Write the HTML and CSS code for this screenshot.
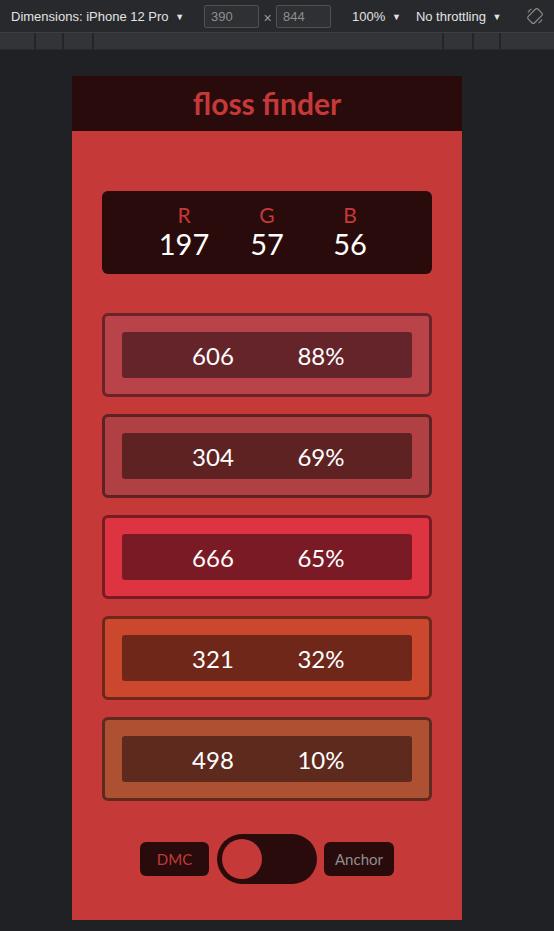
FILE: index.html
```html
<!DOCTYPE html>
<html lang="en">
<head>
<meta charset="utf-8">
<title>floss finder</title>
<link rel="stylesheet" href="styles.css">
</head>
<body>
<div class="toolbar">
  <span class="tb-item dims">Dimensions: iPhone 12 Pro <span class="caret">▼</span></span>
  <span class="tb-input">390</span>
  <span class="times">×</span>
  <span class="tb-input">844</span>
  <span class="tb-item zoom">100% <span class="caret">▼</span></span>
  <span class="tb-item throttle">No throttling <span class="caret">▼</span></span>
  <svg class="rotate" width="20" height="20" viewBox="0 0 20 20">
    <g fill="none" stroke="#8a8a8a" stroke-width="1.2">
      <rect x="5.5" y="3" width="9" height="14" rx="2" transform="rotate(45 10 10)"/>
      <path d="M3 6.5 A8 8 0 0 1 6.5 3"/>
      <path d="M17 13.5 A8 8 0 0 1 13.5 17"/>
    </g>
  </svg>
</div>
<div class="ruler">
  <span class="seg s1"></span><span class="seg s2"></span><span class="seg s3"></span>
  <span class="seg grow"></span>
  <span class="seg s4"></span><span class="seg s5"></span><span class="seg s6"></span>
</div>
<div class="stage">
  <div class="phone">
    <header class="app-header"><h1>floss finder</h1></header>
    <main class="app-main">
      <section class="rgb">
        <div class="rgb-col"><span class="rgb-label">R</span><span class="rgb-val">197</span></div>
        <div class="rgb-col"><span class="rgb-label">G</span><span class="rgb-val">57</span></div>
        <div class="rgb-col"><span class="rgb-label">B</span><span class="rgb-val">56</span></div>
      </section>
      <section class="matches">
        <div class="card c1"><div class="bar"><span>606</span><span>88%</span></div></div>
        <div class="card c2"><div class="bar"><span>304</span><span>69%</span></div></div>
        <div class="card c3"><div class="bar"><span>666</span><span>65%</span></div></div>
        <div class="card c4"><div class="bar"><span>321</span><span>32%</span></div></div>
        <div class="card c5"><div class="bar"><span>498</span><span>10%</span></div></div>
      </section>
      <section class="brand-row">
        <button class="brand active">DMC</button>
        <div class="toggle"><span class="knob"></span></div>
        <button class="brand">Anchor</button>
      </section>
    </main>
  </div>
</div>
</body>
</html>
```
FILE: styles.css
```css
* { box-sizing: border-box; }
html, body { margin: 0; padding: 0; }
body {
  background: #202124;
  width: 554px;
  height: 931px;
  overflow: hidden;
  font-family: "Liberation Sans", Arial, sans-serif;
}
.toolbar {
  height: 33px;
  background: #28292c;
  border-bottom: 1px solid #3d3e41;
  display: flex;
  align-items: center;
  padding-left: 11px;
  color: #e3e3e3;
  font-size: 13px;
}
.caret { font-size: 9px; position: relative; top: -1px; margin-left: 3px; }
.dims { margin-right: 20px; }
.tb-input {
  width: 55px;
  height: 23px;
  background: #2f3033;
  border: 1px solid #505154;
  border-radius: 2px;
  color: #8e8e8e;
  padding-left: 6px;
  line-height: 21px;
}
.times { color: #9a9a9a; width: 17px; text-align: center; font-size: 14px; padding-top: 3px; }
.zoom { margin-left: 21px; }
.throttle { margin-left: 15px; }
.rotate { margin-left: 23px; }
.ruler {
  height: 17px;
  background: #333437;
  display: flex;
  border-bottom: 1px solid #2a2a2a;
}
.seg { border-left: 2px solid #242528; height: 100%; }
.s1 { width: 34px; border-left: none; }
.s2 { width: 28px; }
.s3 { width: 30px; }
.grow { flex: 1; }
.s4 { width: 30px; }
.s5 { width: 27px; }
.s6 { width: 55px; }
.stage { padding: 26px 0 0 72px; }
.phone {
  width: 390px;
  height: 844px;
  background: #c53938;
  display: flex;
  flex-direction: column;
  font-family: Lato, "Open Sans", sans-serif;
}
.app-header {
  height: 55px;
  background: #290b0c;
  display: flex;
  align-items: center;
  justify-content: center;
}
.app-header h1 {
  margin: 0;
  color: #c53938;
  font-size: 30px;
  font-weight: 700;
  letter-spacing: 0;
  padding-bottom: 2px;
}
.app-main { padding: 60px 30px 0; }
.rgb {
  height: 83px;
  background: #290b0c;
  border-radius: 6px;
  display: flex;
  justify-content: center;
  align-items: center;
  padding-bottom: 1px;
}
.rgb-col {
  width: 83px;
  display: flex;
  flex-direction: column;
  align-items: center;
}
.rgb-label { color: #c53938; font-size: 21px; line-height: 24px; }
.rgb-val { color: #ffffff; font-size: 29px; line-height: 34px; }
.matches {
  margin-top: 39px;
  display: flex;
  flex-direction: column;
  gap: 17px;
}
.card {
  height: 84px;
  border: 3px solid;
  border-radius: 6px;
  padding: 16px 17px;
}
.bar {
  height: 46px;
  border-radius: 3px;
  display: grid;
  grid-template-columns: 108px 108px;
  justify-content: center;
  justify-items: center;
  align-items: center;
  color: #ffffff;
  font-size: 24px;
}
.c1 { background: #b94349; border-color: #6a2429; }
.c1 .bar { background: #65242a; }
.c2 { background: #b04043; border-color: #5f2224; }
.c2 .bar { background: #5e2223; }
.c3 { background: #de3340; border-color: #7a1b24; }
.c3 .bar { background: #7a1a24; }
.c4 { background: #cb472d; border-color: #6e2719; }
.c4 .bar { background: #6e2719; }
.c5 { background: #ae5133; border-color: #5e2a1e; }
.c5 .bar { background: #5e2a1e; }
.brand-row {
  margin-top: 33px;
  display: flex;
  justify-content: center;
  align-items: center;
  gap: 8px;
}
.brand {
  height: 34px;
  background: #290b0c;
  border: none;
  border-radius: 6px;
  font-family: Lato, "Open Sans", sans-serif;
  font-size: 15px;
  color: #8f8f8f;
  padding: 0;
  width: 70px;
}
.brand.active { color: #c53938; width: 69px; }
.toggle {
  width: 100px;
  height: 50px;
  border-radius: 25px;
  background: #290b0c;
  padding: 5px;
  margin-right: -1px;
}
.knob {
  display: block;
  width: 40px;
  height: 40px;
  border-radius: 50%;
  background: #c53938;
}
```
